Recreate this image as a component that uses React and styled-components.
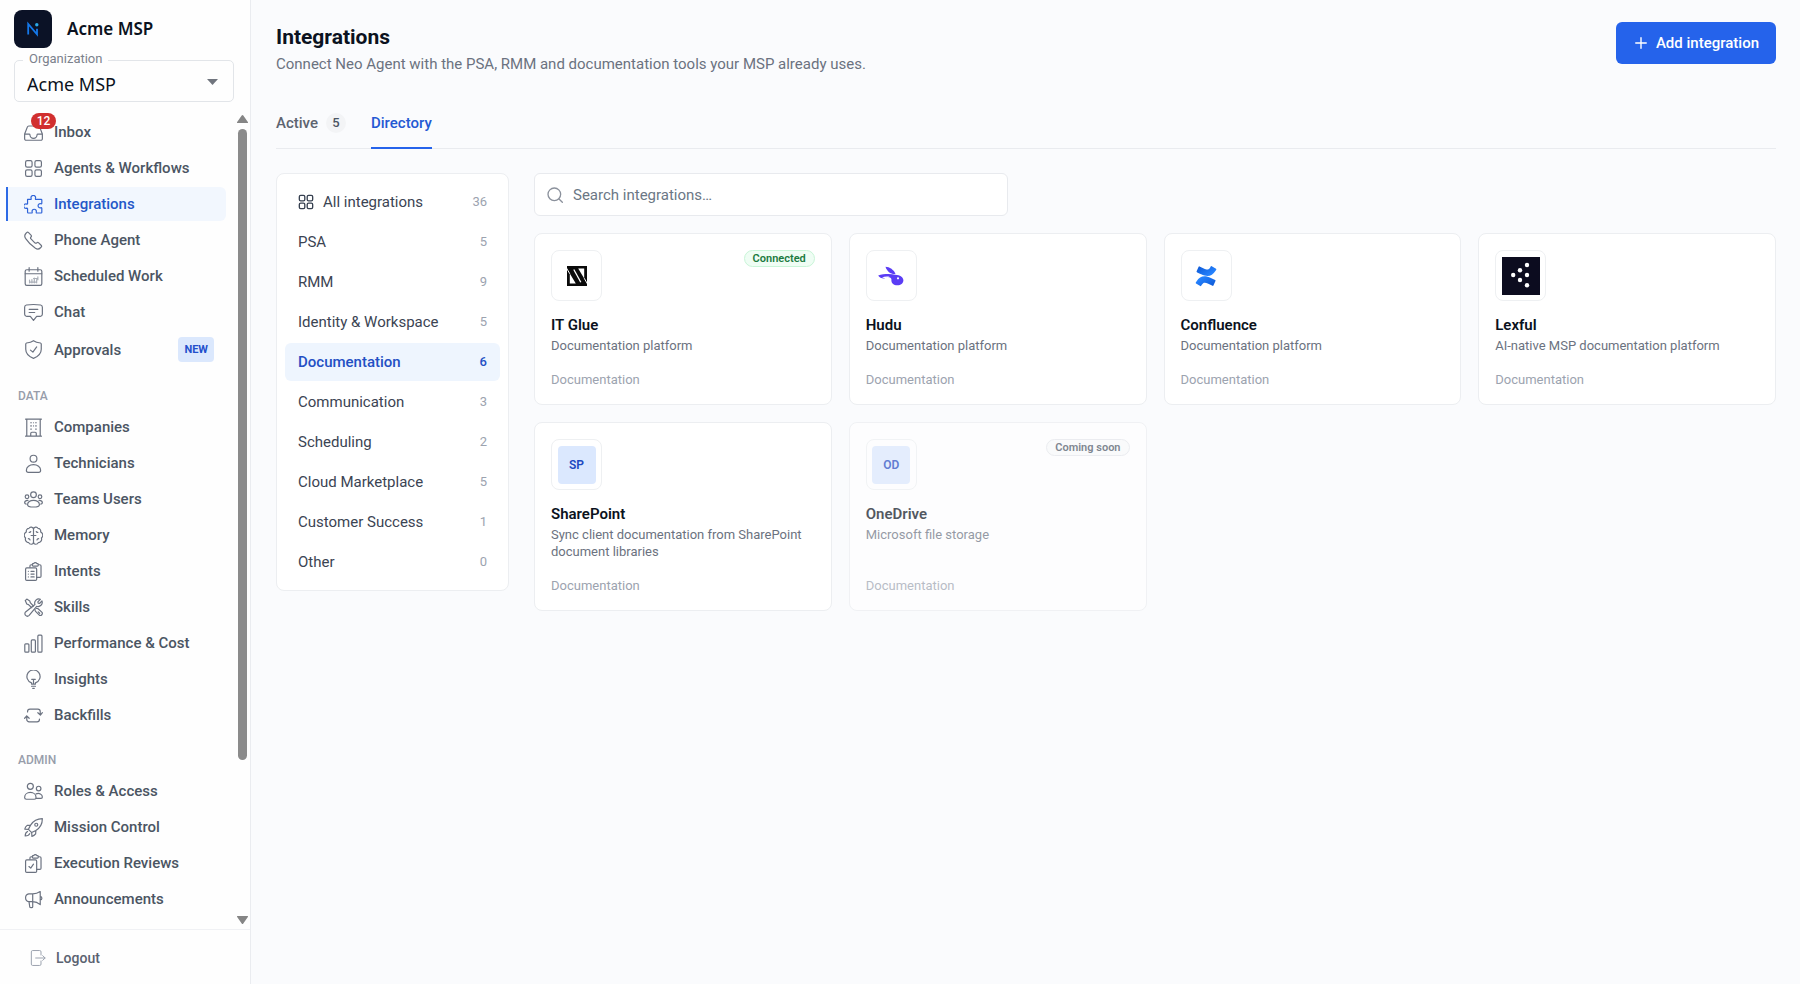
import React from "react";
import styled, { createGlobalStyle, css } from "styled-components";

const Global = createGlobalStyle`
  *, *::before, *::after { box-sizing: border-box; }
  body {
    margin: 0;
    background: #fafbfd;
    color: #0b1220;
    font-family: Roboto, "Liberation Sans", sans-serif;
    font-size: 15px;
    line-height: 20px;
  }
  button, input, select { font: inherit; color: inherit; }
`;

const Shell = styled.div`
  display: flex;
  height: 100vh;
`;

/* ---------- Sidebar ---------- */

const Sidebar = styled.aside`
  flex: none;
  width: 251px;
  display: flex;
  flex-direction: column;
  background: #fefefe;
  border-right: 1px solid #eaecf0;
`;

const Brand = styled.div`
  display: flex;
  align-items: center;
  gap: 15px;
  padding: 9px 14px 0;
  font: 600 17px/40px "Noto Sans", sans-serif;
`;

const BrandMark = styled.svg`
  width: 38px;
  height: 38px;
`;

const OrgField = styled.div`
  position: relative;
  margin: 11px 16px 0 14px;
`;

const OrgLabel = styled.label`
  position: absolute;
  top: -11px;
  left: 9px;
  padding: 0 6px;
  background: #fefefe;
  color: #7b818c;
  font-size: 13px;
  line-height: 20px;
`;

const OrgSelect = styled.select`
  display: block;
  width: 100%;
  height: 42px;
  padding: 6px 12px 0;
  border: 1px solid #e2e5e9;
  border-radius: 5px;
  background: transparent;
  appearance: none;
  font: 400 18px/24px "Noto Sans", sans-serif;
`;

const Caret = styled.svg`
  position: absolute;
  right: 16px;
  top: 19px;
  width: 11px;
  height: 6px;
  pointer-events: none;
`;

const NavArea = styled.div`
  flex: 1;
  min-height: 0;
  display: flex;
  padding-top: 10px;
`;

const Nav = styled.nav`
  flex: 1;
  overflow: hidden;
  padding: 3px 8px 0 6px;
`;

const NavItem = styled.a`
  display: flex;
  align-items: center;
  gap: 11px;
  height: ${(p) => (p.$tall ? 37 : 34)}px;
  margin-bottom: 2px;
  padding: 0 12px 0 16px;
  border-left: 2px solid transparent;
  border-radius: 0 6px 6px 0;
  color: #4b5563;
  font-weight: 500;
  text-decoration: none;
  ${(p) =>
    p.$active &&
    css`
      background: #f2f7fe;
      border-left-color: #2e6be6;
      color: #2457c8;
    `}
`;

const IconSlot = styled.span`
  position: relative;
  display: flex;
  width: 19px;
  height: 19px;
`;

const Glyph = styled.svg`
  width: ${(p) => p.$size || 19}px;
  height: ${(p) => p.$size || 19}px;
  fill: none;
  stroke: ${(p) => p.$color || "#6b7280"};
  stroke-width: ${(p) => p.$weight || 1.5};
  stroke-linecap: round;
  stroke-linejoin: round;
`;

const CountBadge = styled.span`
  position: absolute;
  left: 7px;
  top: -10px;
  width: 25px;
  border-radius: 8px;
  background: #d12f2f;
  color: #fff;
  font-size: 12px;
  font-weight: 500;
  line-height: 16px;
  text-align: center;
`;

const NewTag = styled.span`
  margin-left: auto;
  padding: 0 6px;
  border-radius: 4px;
  background: #dbe8fd;
  color: #2350cc;
  font-size: 11px;
  font-weight: 700;
  line-height: 25px;
`;

const NavHeading = styled.h2`
  margin: 18px 0 4px;
  padding: 0 12px;
  color: #979daa;
  font-size: 12px;
  font-weight: 500;
  line-height: 20px;
`;

const Scroller = styled.div`
  flex: none;
  width: 16px;
  display: flex;
  flex-direction: column;
  align-items: center;
  gap: 6px;
  padding: 3px 0 5px;
`;

const ScrollThumb = styled.div`
  width: 9px;
  height: 78%;
  margin-bottom: auto;
  border-radius: 5px;
  background: #8b8b8b;
`;

const Arrow = styled.svg`
  flex: none;
  width: 11px;
  height: 8px;
  fill: #858585;
`;

const Footer = styled.div`
  height: 55px;
  padding: 11px 30px;
  border-top: 1px solid #f0f1f4;
`;

const Logout = styled.a`
  display: flex;
  align-items: center;
  gap: 10px;
  height: 34px;
  color: #5a6270;
  font-size: 14px;
  font-weight: 500;
  text-decoration: none;
`;

/* ---------- Main ---------- */

const Main = styled.main`
  flex: 1;
  min-width: 0;
  padding: 22px 24px 24px 25px;
`;

const PageHeader = styled.header`
  display: flex;
  align-items: flex-start;
  justify-content: space-between;
`;

const Title = styled.h1`
  margin: 0;
  font-size: 21px;
  font-weight: 700;
  line-height: 30px;
`;

const Subtitle = styled.p`
  margin: 2px 0 0;
  color: #6b7280;
  line-height: 20px;
`;

const AddButton = styled.button`
  display: flex;
  align-items: center;
  gap: 8px;
  height: 42px;
  padding: 0 17px 0 18px;
  border: 0;
  border-radius: 6px;
  background: #2563eb;
  color: #fff;
  font-weight: 500;
`;

const Tabs = styled.div`
  display: flex;
  gap: 25px;
  margin-top: 23px;
  border-bottom: 1px solid #e9ebef;
`;

const Tab = styled.button`
  display: flex;
  align-items: center;
  gap: 8px;
  height: 52px;
  margin-bottom: -1px;
  padding: 1px 0 0;
  border: 0;
  border-bottom: 2px solid ${(p) => (p.$active ? "#2563eb" : "transparent")};
  background: none;
  color: ${(p) => (p.$active ? "#2459d3" : "#5d6470")};
  font-weight: 500;
`;

const TabCount = styled.span`
  min-width: 20px;
  border-radius: 10px;
  background: #f3f4f6;
  color: #4b5563;
  font-size: 13px;
  line-height: 20px;
`;

const Body = styled.div`
  display: flex;
  align-items: flex-start;
  gap: 25px;
  margin-top: 24px;
`;

const Categories = styled.nav`
  flex: none;
  width: 233px;
  display: flex;
  flex-direction: column;
  gap: 2px;
  padding: 9px 8px;
  border: 1px solid #eceef1;
  border-radius: 8px;
  background: #fff;
`;

const Category = styled.button`
  display: flex;
  align-items: center;
  gap: 9px;
  height: 38px;
  padding: 0 13px;
  border: 0;
  border-radius: 6px;
  background: ${(p) => (p.$active ? "#eef5fe" : "transparent")};
  color: ${(p) => (p.$active ? "#2350c4" : "#3b4453")};
  font-weight: ${(p) => (p.$active ? 500 : 400)};
`;

const CategoryCount = styled.span`
  margin-left: auto;
  color: ${(p) => (p.$active ? "#2350c4" : "#9ca3af")};
  font-size: 13px;
`;

const Content = styled.div`
  flex: 1;
  min-width: 0;
`;

const SearchBox = styled.label`
  display: flex;
  align-items: center;
  gap: 10px;
  width: 100%;
  max-width: 474px;
  height: 43px;
  padding: 0 12px;
  border: 1px solid #e8eaee;
  border-radius: 6px;
  background: #fff;
`;

const SearchInput = styled.input`
  flex: 1;
  min-width: 0;
  padding: 0;
  border: 0;
  outline: 0;
  background: none;
  &::placeholder { color: #6b7785; opacity: 1; }
`;

const Grid = styled.div`
  display: grid;
  grid-template-columns: repeat(4, 1fr);
  gap: 17px;
  margin-top: 17px;
`;

const Card = styled.article`
  display: flex;
  flex-direction: column;
  padding: 16px;
  border: 1px solid #eceef1;
  border-radius: 8px;
  background: #fff;
  opacity: ${(p) => (p.$muted ? 0.7 : 1)};
`;

const CardTop = styled.div`
  display: flex;
  align-items: flex-start;
  justify-content: space-between;
`;

const LogoTile = styled.div`
  display: flex;
  align-items: center;
  justify-content: center;
  width: 51px;
  height: 51px;
  border: 1px solid #eef0f2;
  border-radius: 8px;
  background: #fff;
`;

const LogoArt = styled.svg`
  width: 38px;
  height: 38px;
`;

const Initials = styled.span`
  width: 38px;
  border-radius: 4px;
  background: #dbe8fe;
  color: #2149c1;
  font-size: 12px;
  font-weight: 600;
  line-height: 38px;
  text-align: center;
`;

const Status = styled.span`
  padding: 0 8px;
  border: 1px solid ${(p) => (p.$ok ? "#c9f5d8" : "#e5e7eb")};
  border-radius: 9px;
  background: ${(p) => (p.$ok ? "#effdf4" : "#f9fafb")};
  color: ${(p) => (p.$ok ? "#1b7a40" : "#4b5563")};
  font-size: 11px;
  font-weight: 600;
  line-height: 15px;
`;

const CardTitle = styled.h3`
  margin: 14px 0 2px;
  font-size: 15px;
  font-weight: 600;
  line-height: 20px;
`;

const CardText = styled.p`
  margin: 0 0 17px;
  color: #6b7280;
  font-size: 13px;
  line-height: 17px;
`;

const CardKind = styled.p`
  margin: auto 0 0;
  color: #9ca3af;
  font-size: 13px;
  line-height: 17px;
`;

/* ---------- Icons ---------- */

const squares = (
  <>
    <rect x="2" y="2" width="8.2" height="8.2" rx="2" />
    <rect x="13.8" y="2" width="8.2" height="8.2" rx="2" />
    <rect x="2" y="13.8" width="8.2" height="8.2" rx="2" />
    <rect x="13.8" y="13.8" width="8.2" height="8.2" rx="2" />
  </>
);

const clipboardBack = (
  <path d="M7.500 6.500V5A1.500 1.500 0 0 1 9 3.500h1.500M18 3.500h2A1.500 1.500 0 0 1 21.500 5v13a1.500 1.500 0 0 1-1.500 1.500h-4M10.500 3a1 1 0 0 1 1-1h.8a2.200 2.200 0 0 1 3.900 0h.8a1 1 0 0 1 1 1v1.200a1 1 0 0 1-1 1h-5.500a1 1 0 0 1-1-1z" />
);

const icons = {
  inbox: (
    <path d="M.8 14h5.700a1 1 0 0 1 1 .9 4.500 4.500 0 0 0 9 0 1 1 0 0 1 1-.9h5.700M.8 14v6a1.800 1.800 0 0 0 1.800 1.800h18.800a1.800 1.800 0 0 0 1.800-1.800v-6L19.800 5.200a2 2 0 0 0-1.900-1.400H6.100a2 2 0 0 0-1.900 1.400z" />
  ),
  grid: squares,
  puzzle: (
    <path d="M4.500 5.500h4a.7.7 0 0 0 .6-1 2.900 2.900 0 1 1 5.300 0 .7.7 0 0 0 .6 1h6.700a.8.8 0 0 1 .8.800v4.200a.7.7 0 0 1-1 .6 2.700 2.700 0 1 0 0 5 .7.7 0 0 1 1 .6v5.200a.8.8 0 0 1-.8.800H16a.7.7 0 0 1-.6-1 2.700 2.700 0 1 0-5 0 .7.7 0 0 1-.6 1H5.300a.8.8 0 0 1-.8-.8v-4.700a.7.7 0 0 0-1-.6 2.800 2.800 0 1 1 0-5.100.7.7 0 0 0 1-.6z" />
  ),
  phone: (
    <path d="M15.656 22.011l.013.008a5.179 5.179 0 0 0 6.418-.71l.721-.721a1.727 1.727 0 0 0 0-2.442l-3.040-3.039a1.727 1.727 0 0 0-2.442 0 1.726 1.726 0 0 1-2.441 0L10.018 10.238a1.727 1.727 0 0 1 0-2.442 1.727 1.727 0 0 0 0-2.442L6.978 2.313a1.727 1.727 0 0 0-2.442 0l-.721.721a5.179 5.179 0 0 0-.711 6.418l.009.013a45.694 45.694 0 0 0 12.543 12.546z" transform="translate(-1.200 -.2)" />
  ),
  calendar: (
    <>
      <rect x="1.500" y="3.500" width="21" height="19.700" rx="2" />
      <path d="M1.500 8.500h21M6.500.8v4.500M17.500.8v4.500" />
      <path d="M7 20v-3.500M10 20v-4M13 20v-6M16 20v-4M17.500 16v-3.500M7 19h9M12 14.500h5" stroke="#a9aeb7" />
    </>
  ),
  chat: (
    <path d="M21 2.500c1.200.3 2.200 1.300 2.200 3v8.700c0 1.700-1.200 2.500-2.700 2.800H16l-4 5-4-5H3.500C2 16.700.8 15.800.8 14.200V5.500c0-1.700 1-2.700 2.200-3q9-1.200 18 0zM6.500 8h11M6.500 12h7" />
  ),
  shield: (
    <path d="M2.200 5.200v6.500c0 6.500 5.300 9.700 9.800 11.500 4.500-1.800 9.800-5 9.800-11.500V5.200a1.500 1.500 0 0 0-1-1.400C17.500 3.500 14.500 2.700 12 .9 9.500 2.700 6.500 3.500 3.200 3.800a1.500 1.500 0 0 0-1 1.400zM16 8.800l-4.800 6.500-3-2.500" />
  ),
  building: (
    <path d="M3.500 1.500v21.500M20.500 1.500v21.500M2 1.500h20M2 23h20M8.500 23v-3.500a1.500 1.500 0 0 1 1.500-1.500h4a1.500 1.500 0 0 1 1.500 1.500V23M8.500 6h.8M14.700 6h.8M8.500 10h.8M14.700 10h.8M8.500 14h.8M14.700 14h.8M12 6v0M12 10v0" />
  ),
  person: (
    <path d="M12 10.200a4.300 4.300 0 1 0 0-8.600 4.300 4.300 0 0 0 0 8.600zM3 20.500c0-4 4-7 9-7s9 3 9 7c0 1.500-.9 2.700-2.500 2.700h-13C3.900 23.200 3 22 3 20.500z" />
  ),
  team: (
    <>
      <circle cx="12" cy="6" r="3.600" />
      <circle cx="3.800" cy="8.500" r="2.300" />
      <circle cx="20.200" cy="8.500" r="2.300" />
      <path d="M4.500 18.500c0-3 3.200-5.500 7.500-5.500s7.500 2.500 7.500 5.500c0 2-3.500 3-7.500 3s-7.500-1-7.500-3zM5 13.200c-2.600 0-4.200 1.300-4.200 3 0 .8.800 1.400 2 1.700M19 13.200c2.600 0 4.200 1.300 4.200 3 0 .8-.8 1.400-2 1.700" />
    </>
  ),
  brain: (
    <path d="M12 4v16.500M12 4c-.4-3-4.500-3.600-5.700-1A3.500 3.500 0 0 0 3 7.500a4.500 4.500 0 0 0-1 7.700A4.300 4.300 0 0 0 6 21c1 2.700 6 3 6-.8M12 4c.4-3 4.500-3.600 5.700-1A3.500 3.500 0 0 1 21 7.500a4.500 4.500 0 0 1 1 7.700A4.300 4.300 0 0 1 18 21c-1 2.700-6 3-6-.8M9 12h6M6.500 8c1 .2 1.700-.2 2-1M17.500 8c-1 .2-1.700-.2-2-1M5.500 16c1.300 0 2 .7 2.200 1.700M18.500 16c-1.300 0-2 .7-2.200 1.700" />
  ),
  clipboard: (
    <>
      {clipboardBack}
      <rect x="2" y="7.500" width="14" height="15.700" rx="1.500" />
      <path d="M8.800 11.800h4M8.800 15.300h4M8.800 18.800h4M5.500 11.800v0M5.500 15.300v0M5.500 18.800v0" />
    </>
  ),
  tools: (
    <>
      <path d="M13.800 8.300a5.300 5.300 0 0 1 6.900-6.700L17.500 4.800l.4 1.700 1.700.4 3.100-3.200a5.300 5.300 0 0 1-6.700 6.800L6.500 21.900a2.900 2.900 0 0 1-4.500-4.300z" />
      <path d="M1.600 3.300l1.900-1.900 3.800 2.300.6 2.200 4 4.200M9.800 12.300l-4.100-4-2.200-.7-1.900-4.300M14 14.500c-.3 1 0 1.700.6 2.300l5 5.100a2.600 2.600 0 0 0 3.200-3.700l-5-4.600a2 2 0 0 0-2-.4M18 17.500l1.800 1.800" />
    </>
  ),
  bars: (
    <>
      <rect x="1" y="12.500" width="5.200" height="10.500" rx="1.200" />
      <rect x="9.200" y="7.500" width="5.200" height="15.500" rx="1.200" />
      <rect x="17.500" y="1.500" width="5.200" height="21.500" rx="1.200" />
    </>
  ),
  bulb: (
    <path d="M9.500 17.800v-1.600A8.300 8.300 0 1 1 14.500 16.200v1.600zM12 17.500v-5.500M9.700 11.800h4.600M9.500 20.500h5M11 23.200h2" />
  ),
  sync: (
    <path d="M4.500 7.500V7a3 3 0 0 1 3-3h10a3 3 0 0 1 3 3v4.500M17.500 8.500l3.200 3 2.500-3M19.500 16.500v.5a3 3 0 0 1-3 3h-10a3 3 0 0 1-3-3v-4.500M.8 15.500l2.700-3 3 3" />
  ),
  people: (
    <>
      <circle cx="8" cy="5.500" r="3.800" />
      <circle cx="18.500" cy="8.300" r="2.900" />
      <path d="M.8 19.500c0-3.700 3-6.300 7.200-6.300s7.200 2.600 7.200 6.300c0 1.400-1 2.300-2.200 2.300H3c-1.200 0-2.200-.9-2.200-2.300zM15.300 15c3.800-1.600 7.900.5 7.900 4 0 1-.7 1.800-1.700 1.800H15" />
    </>
  ),
  rocket: (
    <>
      <path d="M23.200.8C16 .8 11.500 4 8.300 9l-4.300.3c-1.500 1.200-2.600 2.700-3 4.700l4.600.3 4.100 4.100.3 4.800c2-.5 3.500-1.500 4.700-3l.3-4.500C20 12.500 23.200 8 23.200.8zM5.600 14.300L8.300 9M9.700 18.400l5.300-2.700M4.500 17c-2 .8-3 3-3 5.700 2.700 0 5-1 5.700-3" />
      <circle cx="15.500" cy="8.500" r="1.900" />
    </>
  ),
  clipboardCheck: (
    <>
      {clipboardBack}
      <rect x="2" y="7.500" width="14" height="15.700" rx="1.500" />
      <path d="M12 12.800l-3.500 5-2.200-2" />
    </>
  ),
  megaphone: (
    <path d="M20.500 2v16.500c-3-2.600-6-3.800-9.500-3.800H6A5 5 0 0 1 6 4.900h5c3.500 0 6.500-.9 9.500-2.900zM11 5v9.700M6.300 14.700l1 6.800c.2 1 3.700 1 3.700 0v-6.800M20.500 8.300a2 2 0 0 1 0 4.200" />
  ),
  logout: (
    <path d="M16.500 7.500V2.800a2 2 0 0 0-2-2H4a2 2 0 0 0-2 2v18.400a2 2 0 0 0 2 2h10.500a2 2 0 0 0 2-2v-4.700M8.500 12h14M19 8.500l3.700 3.500-3.700 3.500" />
  ),
  search: (
    <>
      <circle cx="11" cy="11" r="9.500" />
      <path d="M18 18l5 5" />
    </>
  ),
  plus: <path d="M12 3v18M3 12h18" />,
};

const Icon = ({ name, ...rest }) => (
  <Glyph viewBox="0 0 24 24" aria-hidden="true" {...rest}>
    {icons[name]}
  </Glyph>
);

/* ---------- Product logos ---------- */

const logos = {
  itglue: (
    <>
      <path d="M9 9h20v20H9z" fill="#0a0a0a" />
      <path d="M11.800 16.500V26.400h6zM26.200 21.500V11.600h-6z" fill="#fff" />
      <path d="M15.800 12.500l7 12.800" stroke="#fff" strokeWidth="1.300" />
      <path d="M8.500 11l3.300 5.800M29.500 27l-3.300-5.800" stroke="#fff" strokeWidth="1" />
    </>
  ),
  hudu: (
    <g fill="#5b3df5">
      <path d="M13.500 9.700c4 .2 8.500 3 10 7.300-4.500.5-8.500-2.300-10-7.300z" />
      <path d="M6.200 18.500c5-1.600 12-1.800 17-.8 5 .4 8.200 2.300 8.200 5.600 0 3-2.700 5-6 5-3.700 0-6.400-2-6-6 0-1.400-1.500-2.400-4-2.300-2 .1-2.800.7-2.600 1.500-3 .2-5.500-1-6.600-3z" />
      <path d="M10 20.600c2.200-1.100 5-1.300 7.800-.8-2.400.2-3.800.9-4.200 2.200-1-.8-2.200-1.200-3.600-1.400z" fill="#fff" />
      <circle cx="26" cy="21.300" r="1.100" fill="#fff" />
    </g>
  ),
  confluence: (
    <>
      <defs>
        <linearGradient id="cf-a" x1="1" y1="1" x2="0" y2="0.3">
          <stop offset="0.1" stopColor="#0f5bd8" />
          <stop offset="0.9" stopColor="#2684ff" />
        </linearGradient>
        <linearGradient id="cf-b" x1="0" y1="0" x2="1" y2="0.7">
          <stop offset="0.1" stopColor="#0f5bd8" />
          <stop offset="0.9" stopColor="#2684ff" />
        </linearGradient>
      </defs>
      <g transform="translate(8.700 8.800) scale(.86)">
        <path fill="url(#cf-a)" d="M.87 18.257c-.248.382-.53.875-.763 1.245a.764.764 0 0 0 .255 1.040l4.965 3.054a.764.764 0 0 0 1.058-.26c.199-.332.454-.763.733-1.221 1.967-3.247 3.945-2.853 7.508-1.146l4.957 2.337a.764.764 0 0 0 1.028-.382l2.364-5.346a.764.764 0 0 0-.382-1 599.851 599.851 0 0 1-4.965-2.361C10.911 10.970 5.224 11.185.87 18.257z" />
        <path fill="url(#cf-b)" d="M23.131 5.743c.249-.405.531-.875.764-1.250a.764.764 0 0 0-.256-1.034L18.675.404a.764.764 0 0 0-1.058.26c-.195.335-.451.763-.734 1.225-1.966 3.246-3.945 2.850-7.508 1.146L4.437.694a.764.764 0 0 0-1.027.382L1.046 6.422a.764.764 0 0 0 .382 1c1.039.49 3.105 1.467 4.965 2.361 6.698 3.246 12.392 3.029 16.738-4.040z" />
      </g>
    </>
  ),
  lexful: (
    <>
      <path d="M0 0h38v38H0z" fill="#0c0c1f" />
      {[[25, 8], [18, 13.3], [11.2, 18], [25, 18], [18, 23], [25, 28.3]].map(([x, y]) => (
        <circle key={`${x}-${y}`} cx={x} cy={y} r="2.200" fill="#fff" />
      ))}
    </>
  ),
};

/* ---------- Data ---------- */

const mainNav = [
  { label: "Inbox", icon: "inbox", count: 12 },
  { label: "Agents & Workflows", icon: "grid" },
  { label: "Integrations", icon: "puzzle", active: true },
  { label: "Phone Agent", icon: "phone" },
  { label: "Scheduled Work", icon: "calendar" },
  { label: "Chat", icon: "chat" },
  { label: "Approvals", icon: "shield", tag: "NEW" },
];

const dataNav = [
  { label: "Companies", icon: "building" },
  { label: "Technicians", icon: "person" },
  { label: "Teams Users", icon: "team" },
  { label: "Memory", icon: "brain" },
  { label: "Intents", icon: "clipboard" },
  { label: "Skills", icon: "tools" },
  { label: "Performance & Cost", icon: "bars" },
  { label: "Insights", icon: "bulb" },
  { label: "Backfills", icon: "sync" },
];

const adminNav = [
  { label: "Roles & Access", icon: "people" },
  { label: "Mission Control", icon: "rocket" },
  { label: "Execution Reviews", icon: "clipboardCheck" },
  { label: "Announcements", icon: "megaphone" },
];

const categories = [
  ["All integrations", 36],
  ["PSA", 5],
  ["RMM", 9],
  ["Identity & Workspace", 5],
  ["Documentation", 6],
  ["Communication", 3],
  ["Scheduling", 2],
  ["Cloud Marketplace", 5],
  ["Customer Success", 1],
  ["Other", 0],
];

const cards = [
  { name: "IT Glue", text: "Documentation platform", logo: "itglue", status: "Connected" },
  { name: "Hudu", text: "Documentation platform", logo: "hudu" },
  { name: "Confluence", text: "Documentation platform", logo: "confluence" },
  { name: "Lexful", text: "AI-native MSP documentation platform", logo: "lexful" },
  { name: "SharePoint", text: "Sync client documentation from SharePoint document libraries", initials: "SP" },
  { name: "OneDrive", text: "Microsoft file storage", initials: "OD", status: "Coming soon", muted: true },
];

const NavList = ({ items }) =>
  items.map((item) => (
    <NavItem
      key={item.label}
      href="#"
      $active={item.active}
      $tall={Boolean(item.tag)}
      aria-current={item.active ? "page" : undefined}
    >
      <IconSlot>
        <Icon name={item.icon} $color={item.active ? "#2e63d8" : undefined} />
        {item.count && <CountBadge>{item.count}</CountBadge>}
      </IconSlot>
      {item.label}
      {item.tag && <NewTag>{item.tag}</NewTag>}
    </NavItem>
  ));

export default function App() {
  return (
    <>
      <Global />
      <Shell>
        <Sidebar>
          <Brand>
            <BrandMark viewBox="0 0 38 38" aria-hidden="true">
              <rect width="38" height="38" rx="8" fill="#0b1226" />
              <path d="M14.200 24.500V14l8.800 10.300v-5.500" fill="none" stroke="#1478ea" strokeWidth="1.800" />
              <circle cx="22.800" cy="14.800" r="1.700" fill="#2aa9e8" />
            </BrandMark>
            Acme MSP
          </Brand>
          <OrgField>
            <OrgLabel htmlFor="organization">Organization</OrgLabel>
            <OrgSelect id="organization" defaultValue="acme">
              <option value="acme">Acme MSP</option>
            </OrgSelect>
            <Caret viewBox="0 0 11 6" aria-hidden="true">
              <path d="M0 0h11L5.500 6z" fill="#70757e" />
            </Caret>
          </OrgField>
          <NavArea>
            <Nav aria-label="Main">
              <NavList items={mainNav} />
              <NavHeading>DATA</NavHeading>
              <NavList items={dataNav} />
              <NavHeading>ADMIN</NavHeading>
              <NavList items={adminNav} />
            </Nav>
            <Scroller aria-hidden="true">
              <Arrow viewBox="0 0 11 8"><path d="M4.700.6a1 1 0 0 1 1.600 0L11 7.200a.5.5 0 0 1-.4.8H.4a.5.5 0 0 1-.4-.8z" /></Arrow>
              <ScrollThumb />
              <Arrow viewBox="0 0 11 8"><path d="M4.700 7.400a1 1 0 0 0 1.600 0L11 .8a.5.5 0 0 0-.4-.8H.4a.5.5 0 0 0-.4.8z" /></Arrow>
            </Scroller>
          </NavArea>
          <Footer>
            <Logout href="#">
              <Icon name="logout" $size={16} $color="#9ca3af" />
              Logout
            </Logout>
          </Footer>
        </Sidebar>

        <Main>
          <PageHeader>
            <div>
              <Title>Integrations</Title>
              <Subtitle>
                Connect Neo Agent with the PSA, RMM and documentation tools your MSP already uses.
              </Subtitle>
            </div>
            <AddButton type="button">
              <Icon name="plus" $size={14} $color="#fff" $weight={2.4} />
              Add integration
            </AddButton>
          </PageHeader>

          <Tabs role="tablist">
            <Tab type="button" role="tab" aria-selected="false">
              Active <TabCount>5</TabCount>
            </Tab>
            <Tab type="button" role="tab" aria-selected="true" $active>
              Directory
            </Tab>
          </Tabs>

          <Body>
            <Categories aria-label="Categories">
              {categories.map(([label, count], i) => {
                const active = label === "Documentation";
                return (
                  <Category key={label} type="button" $active={active}>
                    {i === 0 && <Icon name="grid" $size={16} $color="#374151" $weight={2} />}
                    {label}
                    <CategoryCount $active={active}>{count}</CategoryCount>
                  </Category>
                );
              })}
            </Categories>

            <Content>
              <SearchBox>
                <Icon name="search" $size={16} $color="#8b919c" $weight={2} />
                <SearchInput type="search" placeholder="Search integrations…" aria-label="Search integrations" />
              </SearchBox>
              <Grid>
                {cards.map((card) => (
                  <Card key={card.name} $muted={card.muted}>
                    <CardTop>
                      <LogoTile>
                        {card.logo ? (
                          <LogoArt viewBox="0 0 38 38" aria-hidden="true">{logos[card.logo]}</LogoArt>
                        ) : (
                          <Initials>{card.initials}</Initials>
                        )}
                      </LogoTile>
                      {card.status && <Status $ok={card.status === "Connected"}>{card.status}</Status>}
                    </CardTop>
                    <CardTitle>{card.name}</CardTitle>
                    <CardText>{card.text}</CardText>
                    <CardKind>Documentation</CardKind>
                  </Card>
                ))}
              </Grid>
            </Content>
          </Body>
        </Main>
      </Shell>
    </>
  );
}
